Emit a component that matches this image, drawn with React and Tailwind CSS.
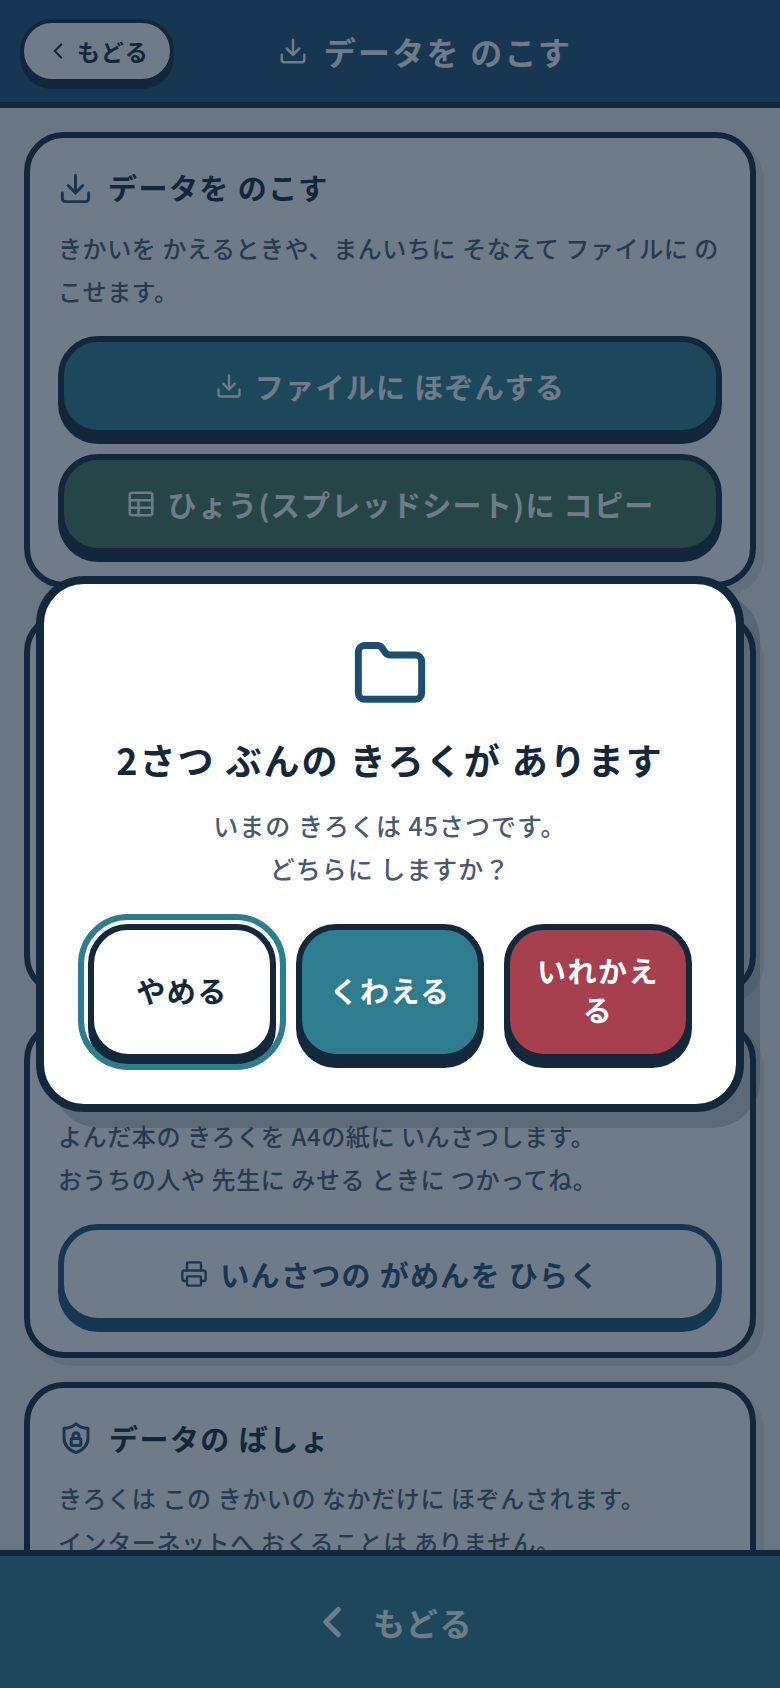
import { ChevronLeft, Download, Folder, Printer } from "lucide-react";

const font = { fontFamily: '"Noto Sans CJK JP", sans-serif' };

function ShieldLock({ size = 36 }) {
  return (
    <svg width={size} height={size} viewBox="0 0 24 24" fill="none" stroke="currentColor" strokeWidth="2" strokeLinecap="round" strokeLinejoin="round" className="shrink-0">
      <path d="M12 2.500C14 4.500 17 5.500 20 5.500V12C20 17 16.500 20 12 21.800C7.500 20 4 17 4 12V5.500C7 5.500 10 4.500 12 2.500Z" />
      <rect x="8.800" y="12.400" width="6.400" height="4.600" rx="1" />
      <path d="M10 12.400V10.500a2 2 0 0 1 4 0v1.900" />
    </svg>
  );
}

function TableIcon({ size = 30 }) {
  return (
    <svg width={size} height={size} viewBox="0 0 24 24" fill="none" stroke="currentColor" strokeWidth="2" strokeLinecap="round" strokeLinejoin="round" className="shrink-0">
      <rect x="3" y="3" width="18" height="18" rx="2" />
      <path d="M3 9h18M3 15h18M10 9v12" />
    </svg>
  );
}

function Card({ icon, title, children }) {
  return (
    <section className="rounded-[40px] border-[6px] border-[#14283c] bg-white p-7 shadow-[8px_8px_0_rgba(20,40,60,0.1)]">
      <div className="flex h-11 items-center gap-[15px]">
        <span className="text-[#1e4d72]">{icon}</span>
        <h2 className="text-[29px] font-bold tracking-[0.05em] text-[#14283c]">{title}</h2>
      </div>
      {children}
    </section>
  );
}

function Desc({ lines }) {
  return (
    <p className="mt-4 text-[24px] leading-[43.2px] font-medium tracking-[0.025em] text-[#465a70]">
      {lines.map((line, i) => (
        <span key={i} className="block">{line}</span>
      ))}
    </p>
  );
}

function WideButton({ icon, children, className }) {
  return (
    <button className={`flex h-[100px] w-full items-center justify-center gap-3 rounded-[40px] border-[6px] text-[29px] font-bold tracking-[0.045em] ${className}`}>
      {icon}
      {children}
    </button>
  );
}

export default function App() {
  return (
    <div style={font} className="relative flex h-[1688px] w-[780px] flex-col overflow-hidden bg-[#f3f3f2]">
      <header className="flex h-[108px] shrink-0 items-center border-b-[6px] border-[#14283c] bg-[#1e4d72] px-5">
        <button className="flex h-16 w-[154px] items-center justify-center gap-1.5 rounded-full border-4 border-[#14283c] bg-white text-[23px] font-bold tracking-[0.05em] text-[#14283c] shadow-[0_6px_0_#14283c]">
          <ChevronLeft size={26} />
          もどる
        </button>
        <div className="flex flex-1 items-center justify-center gap-4 text-white">
          <Download size={30} />
          <h1 className="text-[32px] font-bold tracking-[0.07em]">データを のこす</h1>
        </div>
        <div className="w-[84px]" />
      </header>

      <main className="flex min-h-0 flex-1 flex-col gap-6 overflow-hidden px-6 pt-6">
        <Card icon={<Download size={35} />} title="データを のこす">
          <p className="mt-4 text-[24px] leading-[43.2px] font-medium tracking-[0.025em] text-[#465a70]">
            きかいを かえるときや、まんいちに そなえて ファイルに のこせます。
          </p>
          <div className="mt-6 flex flex-col gap-[18px]">
            <WideButton icon={<Download size={28} />} className="border-[#14283c] bg-[#2e7d8f] text-white shadow-[0_8px_0_#14283c]">
              ファイルに ほぞんする
            </WideButton>
            <WideButton icon={<TableIcon />} className="border-[#14283c] bg-[#447558] text-white shadow-[0_8px_0_#14283c]">
              ひょう(スプレッドシート)に コピー
            </WideButton>
          </div>
        </Card>

        <Card icon={<Folder size={35} />} title="データを よみこむ">
          <Desc lines={["ほぞんした ファイルから きろくを", "もどします。いまの きろくに", "くわえるか いれかえるか えらべます。"]} />
          <div className="mt-[26px]">
            <WideButton icon={<Folder size={28} />} className="border-[#1e4d72] bg-white text-[#1e4d72] shadow-[0_8px_0_#1e4d72]">
              ファイルを えらぶ
            </WideButton>
          </div>
        </Card>

        <Card icon={<Printer size={35} />} title="いんさつ">
          <Desc lines={["よんだ本の きろくを A4の紙に いんさつします。", "おうちの人や 先生に みせる ときに つかってね。"]} />
          <div className="mt-6">
            <WideButton icon={<Printer size={28} />} className="border-[#1e4d72] bg-white text-[#1e4d72] shadow-[0_8px_0_#1e4d72]">
              いんさつの がめんを ひらく
            </WideButton>
          </div>
        </Card>

        <Card icon={<ShieldLock />} title="データの ばしょ">
          <Desc lines={["きろくは この きかいの なかだけに ほぞんされます。", "インターネットへ おくることは ありません。"]} />
        </Card>
      </main>

      <footer className="flex h-[138px] shrink-0 items-center justify-center gap-4 border-t-[6px] border-[#14283c] bg-[#2e7d8f] text-[32px] font-bold tracking-[0.05em] text-white">
        <ChevronLeft size={50} strokeWidth={2.5} />
        もどる
      </footer>

      <div className="absolute inset-0 flex items-center justify-center bg-[#14283c]/[0.61]">
        <div className="flex h-[536px] w-[708px] flex-col items-center rounded-[48px] border-8 border-[#14283c] bg-white px-11 pt-[52px] shadow-[16px_16px_0_rgba(20,40,60,0.2)]">
          <Folder size={76} strokeWidth={2.2} className="text-[#1e4d72]" />
          <h2 className="mt-[21px] text-[36px] leading-[52px] font-bold tracking-[0.055em] text-[#14283c]">2さつ ぶんの きろくが あります</h2>
          <p className="mt-[19px] text-center text-[25px] leading-[43.2px] font-medium tracking-[0.04em] text-[#465a70]">
            いまの きろくは 45さつです。
            <br />
            どちらに しますか？
          </p>
          <div className="mt-[34px] grid w-full grid-cols-3 gap-5">
            <button className="h-[136px] rounded-[40px] border-[6px] border-[#14283c] bg-white px-4 pb-1 text-[29px] leading-[39px] font-bold tracking-[0.05em] text-[#14283c] shadow-[0_8px_0_#14283c] outline-[6px] outline-offset-4 outline-[#2e7d8f]">
              やめる
            </button>
            <button className="h-[136px] rounded-[40px] border-[6px] border-[#14283c] bg-[#2e7d8f] px-4 pb-1 text-[29px] leading-[39px] font-bold tracking-[0.05em] text-white shadow-[0_8px_0_#14283c]">
              くわえる
            </button>
            <button className="h-[136px] rounded-[40px] border-[6px] border-[#14283c] bg-[#a63f4e] px-4 pb-1 text-[29px] leading-[39px] font-bold tracking-[0.05em] text-white shadow-[0_8px_0_#14283c]">
              いれかえる
            </button>
          </div>
        </div>
      </div>
    </div>
  );
}
